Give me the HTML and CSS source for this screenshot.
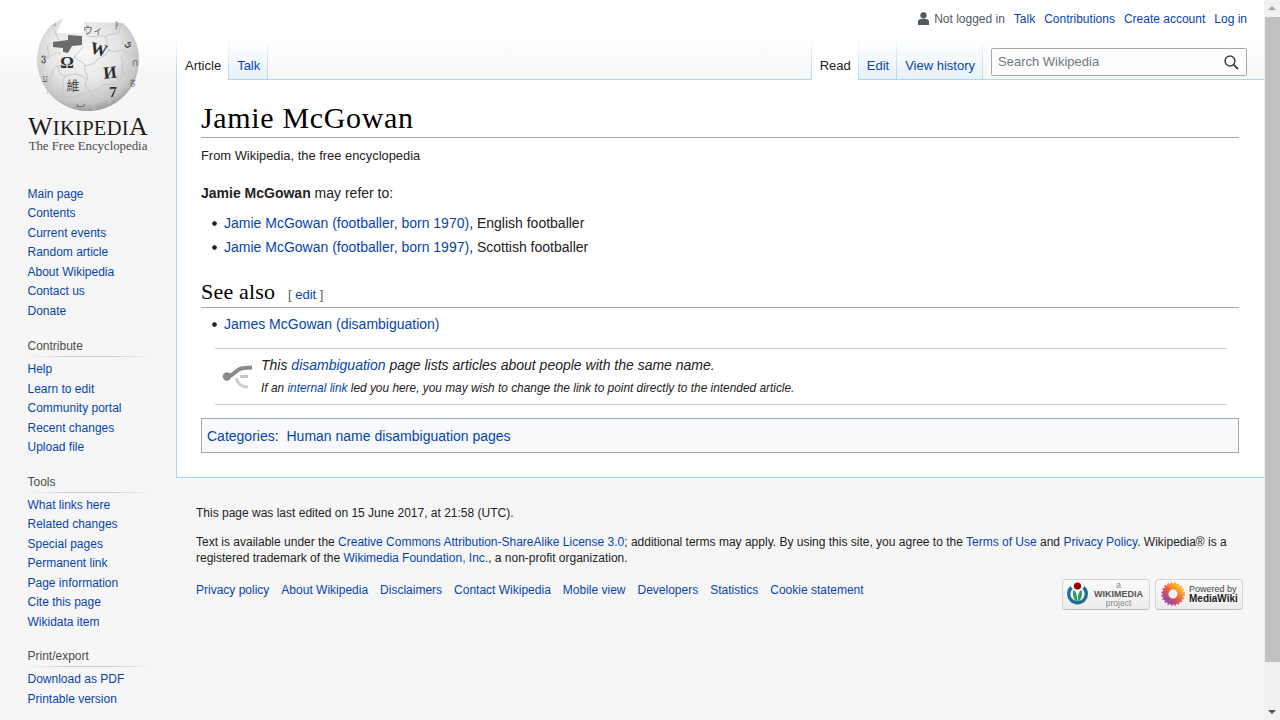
FILE: index.html
```html
<!DOCTYPE html>
<html lang="en">
<head>
    <meta charset="UTF-8">
    <title>Jamie McGowan - Wikipedia</title>
    <link rel="stylesheet" href="styles.css">
</head>
<body>
<div class="window">
    <div class="page">
        <!-- left column: logo and portals -->
        <div class="sidebar">
            <div class="logo">
                <svg class="globe" width="106" height="100" viewBox="0 0 106 100">
                    <defs>
                        <radialGradient id="ball" cx="0.45" cy="0.36" r="0.68">
                            <stop offset="0" stop-color="#f8f8f8"/>
                            <stop offset="0.5" stop-color="#e6e6e6"/>
                            <stop offset="0.82" stop-color="#c4c4c4"/>
                            <stop offset="1" stop-color="#8c8c8c"/>
                        </radialGradient>
                    </defs>
                    <path d="M104 46 A51 51 0 1 1 16 11 L28 4 L22 19 L48 19 L50 8 L88 9 A51 51 0 0 1 104 46 Z" fill="url(#ball)"/>
                    <g class="seams">
                        <path d="M16 12 C22 16 20 22 24 26"/>
                        <path d="M50 9 C54 14 49 18 53 22 C60 24 66 20 70 23 C74 28 70 32 74 36 C80 40 86 34 92 38 C96 42 100 42 103 44"/>
                        <path d="M70 23 C74 18 80 22 84 18 C86 14 84 12 87 9"/>
                        <path d="M48 32 C46 38 42 38 40 42 C42 48 48 46 50 52 C48 58 54 60 52 66 C48 70 52 76 56 78 C60 84 56 90 60 96"/>
                        <path d="M74 36 C72 42 66 42 62 46 C60 50 56 50 50 52"/>
                        <path d="M14 30 C10 34 16 38 12 44 C8 48 10 54 4 58"/>
                        <path d="M12 44 C18 42 20 36 26 40"/>
                        <path d="M40 42 C36 50 30 52 22 52 C16 54 20 62 14 66 C10 70 14 76 12 80"/>
                        <path d="M22 52 C26 58 24 62 30 62 C38 60 44 58 52 66"/>
                        <path d="M56 78 C64 76 66 70 74 70 C80 72 84 66 88 60 C92 56 98 58 103 56"/>
                        <path d="M30 62 C26 70 30 76 26 84 C28 90 34 90 38 94"/>
                        <path d="M26 84 C34 82 40 84 46 80 C50 78 54 80 56 78"/>
                        <path d="M74 70 C72 76 78 82 74 90"/>
                        <path d="M88 60 C86 54 90 48 86 44 C88 42 90 40 92 38"/>
                    </g>
                    <path d="M18 28 L33 26 L33 21 L47 22 L47 31 L37 32 L33 39 L28 38 L28 34 L18 33 Z" fill="#6b6b6b"/>
                    <text class="gl gl-big" x="32" y="54">Ω</text>
                    <text class="gl gl-big" x="64" y="41" transform="rotate(14 64 35)">W</text>
                    <text class="gl gl-big" x="75" y="64" transform="rotate(-6 75 58)">И</text>
                    <text class="gl gl-mid" x="78" y="83">7</text>
                    <text class="gl gl-cjk" x="38" y="76">維</text>
                    <text class="gl gl-small" x="58" y="20">ウィ</text>
                    <text class="gl gl-small gl-dark" x="93" y="32">ي</text>
                    <text class="gl gl-small gl-dark" x="82" y="15">ᚹ</text>
                    <text class="gl gl-small gl-dark" x="8" y="47">ვ</text>
                    <text class="gl gl-small" x="10" y="68">ע</text>
                    <text class="gl gl-small" x="100" y="52">ก</text>
                    <text class="gl gl-small" x="97" y="72">ह</text>
                    <text class="gl gl-small" x="45" y="93">ب</text>
                    <text class="gl gl-small" x="20" y="16">ʻ</text>
                </svg>
            </div>
            <div class="wordmark">W<span>IKIPEDI</span>A</div>
            <div class="tagline">The Free Encyclopedia</div>

            <div class="portal first">
                <a href="#">Main page</a>
                <a href="#">Contents</a>
                <a href="#">Current events</a>
                <a href="#">Random article</a>
                <a href="#">About Wikipedia</a>
                <a href="#">Contact us</a>
                <a href="#">Donate</a>
            </div>
            <div class="portal">
                <h3>Contribute</h3>
                <a href="#">Help</a>
                <a href="#">Learn to edit</a>
                <a href="#">Community portal</a>
                <a href="#">Recent changes</a>
                <a href="#">Upload file</a>
            </div>
            <div class="portal">
                <h3>Tools</h3>
                <a href="#">What links here</a>
                <a href="#">Related changes</a>
                <a href="#">Special pages</a>
                <a href="#">Permanent link</a>
                <a href="#">Page information</a>
                <a href="#">Cite this page</a>
                <a href="#">Wikidata item</a>
            </div>
            <div class="portal">
                <h3>Print/export</h3>
                <a href="#">Download as PDF</a>
                <a href="#">Printable version</a>
            </div>
        </div>

        <div class="main">
            <div class="head">
                <div class="personal">
                    <svg class="user-icon" width="13" height="13" viewBox="0 0 14 14">
                        <circle cx="7" cy="3.6" r="3.4" fill="#54595d"/>
                        <path d="M1 14 V10.5 C1 8.5 3 7.4 7 7.4 C11 7.4 13 8.5 13 10.5 V14 Z" fill="#54595d"/>
                    </svg>
                    <span class="anon">Not logged in</span>
                    <a href="#">Talk</a>
                    <a href="#">Contributions</a>
                    <a href="#">Create account</a>
                    <a href="#">Log in</a>
                </div>
                <div class="nav-row">
                    <div class="tabs">
                        <a class="tab selected" href="#">Article</a>
                        <a class="tab" href="#">Talk</a>
                    </div>
                    <div class="tabs right">
                        <a class="tab selected" href="#">Read</a>
                        <a class="tab" href="#">Edit</a>
                        <a class="tab" href="#">View history</a>
                    </div>
                    <div class="search">
                        <span>Search Wikipedia</span>
                        <svg width="15" height="15" viewBox="0 0 15 15">
                            <circle cx="6" cy="6" r="4.9" fill="none" stroke="#404040" stroke-width="1.5"/>
                            <path d="M9.6 9.6 L14 14" stroke="#404040" stroke-width="1.9"/>
                        </svg>
                    </div>
                </div>
            </div>

            <div class="content">
                <h1>Jamie McGowan</h1>
                <div class="sitesub">From Wikipedia, the free encyclopedia</div>
                <p class="intro"><b>Jamie McGowan</b> may refer to:</p>
                <ul>
                    <li><a href="#">Jamie McGowan (footballer, born 1970)</a>, English footballer</li>
                    <li><a href="#">Jamie McGowan (footballer, born 1997)</a>, Scottish footballer</li>
                </ul>
                <h2>See also <span class="editsection">[ <a href="#">edit</a> ]</span></h2>
                <ul class="see-list">
                    <li><a href="#">James McGowan (disambiguation)</a></li>
                </ul>
                <div class="dmbox">
                    <svg width="30" height="26" viewBox="0 0 30 26">
                        <path d="M18 12.5 H26" fill="none" stroke="#c6c6c6" stroke-width="3"/>
                        <path d="M14 14 C16 20 19 23 26 23" fill="none" stroke="#cfcfcf" stroke-width="3"/>
                        <path d="M5 12.5 C12 12.5 14 4 22 4 L30 3.5" fill="none" stroke="#8a8a8a" stroke-width="4"/>
                        <circle cx="5" cy="12.5" r="4.2" fill="#8a8a8a"/>
                    </svg>
                    <div class="dmtext">
                        <div>This <a href="#">disambiguation</a> page lists articles about people with the same name.</div>
                        <div class="dmsmall">If an <a href="#">internal link</a> led you here, you may wish to change the link to point directly to the intended article.</div>
                    </div>
                </div>
                <div class="catlinks"><a href="#">Categories</a>: <a class="cat" href="#">Human name disambiguation pages</a></div>
            </div>

            <div class="footer">
                <p>This page was last edited on 15 June 2017, at 21:58 (UTC).</p>
                <p class="license">Text is available under the <a href="#">Creative Commons Attribution-ShareAlike License 3.0</a>; additional terms may apply. By using this site, you agree to the <a href="#">Terms of Use</a> and <a href="#">Privacy Policy</a>. Wikipedia® is a registered trademark of the <a href="#">Wikimedia Foundation, Inc.</a>, a non-profit organization.</p>
                <div class="footer-row">
                    <div class="footer-links">
                        <a href="#">Privacy policy</a>
                        <a href="#">About Wikipedia</a>
                        <a href="#">Disclaimers</a>
                        <a href="#">Contact Wikipedia</a>
                        <a href="#">Mobile view</a>
                        <a href="#">Developers</a>
                        <a href="#">Statistics</a>
                        <a href="#">Cookie statement</a>
                    </div>
                    <div class="badges">
                        <div class="badge wm">
                            <svg width="22" height="24" viewBox="0 0 22 24">
                                <path d="M4.5 5.5 A8.8 8.8 0 1 0 16.5 5.5" fill="none" stroke="#1c6f9c" stroke-width="3.4"/>
                                <path d="M6.5 8 C9 9 10.2 13 10.2 19.5 C7 18.5 5 13 6.5 8 Z M14.5 8 C12 9 10.8 13 10.8 19.5 C14 18.5 16 13 14.5 8 Z" fill="#339966"/>
                                <circle cx="10.5" cy="4" r="3.6" fill="#990000"/>
                            </svg>
                            <div class="wm-text"><small>a</small><b>WIKIMEDIA</b><small>project</small></div>
                        </div>
                        <div class="badge mw">
                            <svg width="24" height="24" viewBox="0 0 24 24">
                                <defs>
                                    <linearGradient id="mwg" x1="0.85" y1="0.1" x2="0.15" y2="0.9">
                                        <stop offset="0" stop-color="#f8b32a"/>
                                        <stop offset="0.5" stop-color="#ef5a3c"/>
                                        <stop offset="1" stop-color="#a34a9b"/>
                                    </linearGradient>
                                </defs>
                                <circle cx="12" cy="12" r="7.5" fill="none" stroke="url(#mwg)" stroke-width="6"/>
                                <circle cx="12" cy="12" r="11" fill="none" stroke="url(#mwg)" stroke-width="1.6" stroke-dasharray="2 1.5"/>
                            </svg>
                            <div class="mw-text">Powered by<b>MediaWiki</b></div>
                        </div>
                    </div>
                </div>
            </div>
        </div>
    </div>
    <div class="scrollbar">
        <svg width="16" height="17" viewBox="0 0 16 17"><path d="M4 10 L8 6 L12 10 Z" fill="#a3a3a3"/></svg>
        <div class="thumb"></div>
        <svg width="16" height="17" viewBox="0 0 16 17"><path d="M4 7 L8 11 L12 7 Z" fill="#505050"/></svg>
    </div>
</div>
</body>
</html>
```

FILE: styles.css
```css
html, body {
    margin: 0;
    padding: 0;
    height: 720px;
    overflow: hidden;
}
body {
    font-family: "Liberation Sans", Arial, sans-serif;
    color: #222;
}
a {
    color: #0645ad;
    text-decoration: none;
}
.window {
    display: flex;
    height: 720px;
}
.page {
    flex: 1;
    display: flex;
    background-color: #f6f6f6;
    background-image: linear-gradient(#fff 50%, #f6f6f6 100%);
    background-size: 100% 80px;
    background-repeat: no-repeat;
}

/* sidebar */
.sidebar {
    width: 176px;
    flex: none;
}
.logo {
    height: 100px;
    padding: 14px 0 0 35px;
}
.globe {
    display: block;
}
.seams path {
    fill: none;
    stroke: #c6c6c6;
    stroke-width: 1;
}
.gl {
    font-family: "Liberation Serif", "Noto Sans CJK SC", serif;
    fill: #2c2c2c;
    text-anchor: middle;
}
.gl-big {
    font-size: 17px;
    font-weight: bold;
}
.gl-mid {
    font-size: 15px;
    font-weight: bold;
}
.gl-cjk {
    font-size: 13px;
    fill: #444;
}
.gl-small {
    font-size: 10px;
    fill: #666;
}
.gl-dark {
    fill: #333;
}
.wordmark {
    font-family: "Liberation Serif", serif;
    font-size: 26px;
    line-height: 24px;
    padding-top: 1px;
    margin-bottom: -1px;
    text-align: center;
    color: #1c1c1c;
    letter-spacing: 0.3px;
}
.wordmark span {
    font-size: 20.5px;
}
.tagline {
    font-family: "Liberation Serif", serif;
    font-size: 12.8px;
    line-height: 14px;
    text-align: center;
    color: #4a4a4a;
}
.portal {
    padding: 0 24px 0 27.5px;
    margin-bottom: 17px;
}
.portal.first {
    margin-top: 31.5px;
    margin-bottom: 18px;
}
.portal h3 {
    margin: 0 0 3px -1px;
    padding: 0 0 3px 1px;
    font-size: 12px;
    line-height: 15px;
    font-weight: normal;
    color: #4d4d4d;
    background-image: linear-gradient(to right, rgba(200,204,209,0) 0, #c8ccd1 33%, #c8ccd1 66%, rgba(200,204,209,0) 100%);
    background-size: 100% 1px;
    background-position: bottom;
    background-repeat: no-repeat;
}
.portal a {
    display: block;
    font-size: 12px;
    line-height: 19.5px;
}

/* top bars */
.main {
    flex: 1;
    min-width: 0;
}
.head {
    height: 79px;
}
.personal {
    height: 38px;
    display: flex;
    justify-content: flex-end;
    align-items: center;
    gap: 9px;
    padding-right: 17px;
    font-size: 12px;
}
.personal .user-icon {
    margin-right: -5px;
    margin-top: -2px;
}
.personal .anon {
    color: #54595d;
}
.nav-row {
    display: flex;
    height: 41px;
    padding-right: 17px;
}
.tabs {
    display: flex;
    padding-left: 1px;
    background-image: linear-gradient(rgba(167,215,249,0) 0, #a7d7f9 100%);
    background-size: 1px 100%;
    background-repeat: no-repeat;
}
.tabs.right {
    margin-left: auto;
}
.tab {
    font-size: 13px;
    line-height: 16px;
    padding: 20px 8px 0;
    height: 21px;
    background-image: linear-gradient(rgba(167,215,249,0) 0, #a7d7f9 100%), linear-gradient(#fff 0, #e8f2f8 100%);
    background-size: 1px 100%, 100% 100%;
    background-position: right, left;
    background-repeat: no-repeat;
}
.tab.selected {
    color: #222;
    height: 22px;
    background-image: linear-gradient(rgba(167,215,249,0) 0, #a7d7f9 100%), linear-gradient(#fff, #fff);
}
.search {
    width: 241px;
    height: 26px;
    margin: 10px 0 0 8px;
    border: 1px solid #a2a9b1;
    border-radius: 2px;
    background: rgba(255,255,255,0.6);
    display: flex;
    align-items: center;
    justify-content: space-between;
    padding: 0 7px 0 6px;
    font-size: 13px;
    color: #72777d;
}
.search span {
    padding-bottom: 2px;
}

/* content */
.content {
    background: #fff;
    border: 1px solid #a7d7f9;
    border-right: none;
    padding: 20px 25px 24px 24px;
    color: #222;
    font-size: 14px;
}
h1 {
    margin: 0;
    padding-bottom: 2px;
    font-family: "Liberation Serif", serif;
    font-weight: normal;
    font-size: 30px;
    letter-spacing: 0.65px;
    line-height: 35px;
    color: #000;
    border-bottom: 1px solid #a2a9b1;
}
.sitesub {
    font-size: 12.9px;
    line-height: 17px;
    margin-top: 9px;
}
.intro {
    margin: 18px 0 0;
    line-height: 22px;
}
ul {
    margin: 7px 0 0;
    padding: 0 0 0 11px;
    list-style: none;
}
li {
    line-height: 24px;
    padding-left: 12px;
    background-image: radial-gradient(circle at 2.5px 2.5px, #202122 1.9px, rgba(32,33,34,0) 2.6px);
    background-size: 5px 5px;
    background-position: 0 10px;
    background-repeat: no-repeat;
}
h2 {
    margin: 18px 0 0;
    height: 30px;
    font-family: "Liberation Serif", serif;
    font-weight: normal;
    font-size: 22px;
    letter-spacing: 0.2px;
    line-height: 30px;
    color: #000;
    border-bottom: 1px solid #a2a9b1;
}
.editsection {
    font-family: "Liberation Sans", Arial, sans-serif;
    font-size: 13px;
    line-height: 13px;
    letter-spacing: 0;
    color: #54595d;
    margin-left: 7px;
}
.see-list {
    margin-top: 4px;
}
.dmbox {
    margin: 12px 13px 0 14px;
    height: 55px;
    border-top: 1px solid #c8ccd1;
    border-bottom: 1px solid #c8ccd1;
    display: flex;
    align-items: center;
    gap: 9px;
    padding-left: 7px;
    font-style: italic;
}
.dmtext {
    line-height: 21px;
}
.dmsmall {
    font-size: 11.88px;
    line-height: 22px;
    padding-top: 1px;
}
.catlinks {
    margin-top: 13px;
    border: 1px solid #a2a9b1;
    background: #f8f9fa;
    padding: 10px 5px 8px;
    line-height: 15px;
    height: 15px;
}
.catlinks .cat {
    margin-left: 4px;
}

/* footer */
.footer {
    padding: 26.6px 21px 0 20px;
    font-size: 12px;
    line-height: 16.8px;
}
.footer p {
    margin: 0;
}
.footer .license {
    margin-top: 13px;
    line-height: 16px;
}
.footer-row {
    display: flex;
    justify-content: space-between;
    margin-top: 14.2px;
}
.footer-links {
    display: flex;
    gap: 12px;
    padding-top: 1px;
}
.badges {
    display: flex;
    gap: 5px;
    margin-top: -1.6px;
}
.badge {
    width: 88px;
    height: 31px;
    box-sizing: border-box;
    border: 1px solid #d4d4d4;
    border-bottom-color: #bdbdbd;
    border-radius: 4px;
    background: linear-gradient(#fbfbfb, #ececec);
    display: flex;
    align-items: center;
    line-height: 9px;
}
.badge.wm {
    padding-left: 4px;
    gap: 3px;
}
.badge.mw {
    padding-left: 5px;
    gap: 4px;
}
.wm-text {
    flex: 1;
    text-align: center;
    color: #666;
    padding-right: 4px;
}
.wm-text small {
    display: block;
    font-size: 8.5px;
    color: #888;
}
.wm-text b {
    display: block;
    font-size: 9px;
    color: #555;
}
.mw-text {
    font-size: 9px;
    line-height: 10px;
    color: #444;
}
.mw-text b {
    display: block;
    font-size: 10px;
    color: #222;
}

.scrollbar {
    width: 16px;
    flex: none;
    background: #f1f1f1;
    display: flex;
    flex-direction: column;
}
.scrollbar svg {
    flex: none;
    display: block;
}
.thumb {
    height: 645px;
    margin-left: 1px;
    background: #c1c1c1;
}
.scrollbar svg:last-child {
    margin-top: auto;
}
```
